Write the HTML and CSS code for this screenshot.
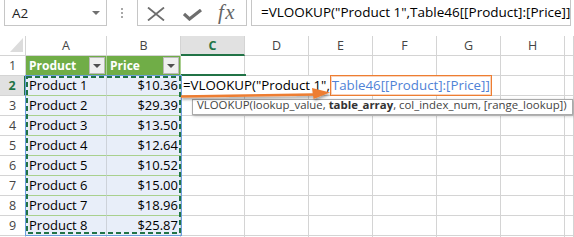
FILE: index.html
```html
<!DOCTYPE html>
<html>
<head>
<meta charset="utf-8">
<link rel="stylesheet" href="styles.css">
</head>
<body>
<div class="app">
  <div class="fbar">
    <div class="namebox"><span class="nb-text">A2</span><span class="nb-caret"></span></div>
    <div class="grip"><i></i><i></i><i></i></div>
    <div class="fbtns">
      <svg class="ic-x" width="18" height="14" viewBox="0 0 18 14"><path d="M1 0.5 L17 13.5 M17 0.5 L1 13.5" stroke="#6e6e6e" stroke-width="1.8" fill="none"/></svg>
      <svg class="ic-ok" width="19" height="12" viewBox="0 0 19 12"><path d="M1 5 L6.5 10 L18 1" stroke="#6e6e6e" stroke-width="3.2" fill="none" stroke-linejoin="miter"/></svg>
      <span class="fx">fx</span>
    </div>
    <div class="finput">=VLOOKUP("Product 1",Table46[[Product]:[Price]]</div>
  </div>

  <div class="sheet">
    <div class="cells">
      <div class="corner"><svg width="25" height="19" viewBox="0 0 25 19"><polygon points="10,16 23,16 23,2" fill="#dcdcdc"/></svg></div>
      <div class="ch">A</div><div class="ch">B</div><div class="ch on">C</div><div class="ch">D</div><div class="ch">E</div><div class="ch">F</div><div class="ch">G</div><div class="ch">H</div><div class="ch"></div>

      <div class="rh">1</div>
      <div class="th"><span>Product</span><span class="dd"></span></div>
      <div class="th"><span>Price</span><span class="dd"></span></div>
      <div class="c"></div><div class="c"></div><div class="c"></div><div class="c"></div><div class="c"></div><div class="c"></div><div class="c"></div>

      <div class="rh on">2</div>
      <div class="td">Product 1</div><div class="td num">$10.36</div>
      <div class="c"></div><div class="c"></div><div class="c"></div><div class="c"></div><div class="c"></div><div class="c"></div><div class="c"></div>

      <div class="rh">3</div>
      <div class="td">Product 2</div><div class="td num">$29.39</div>
      <div class="c"></div><div class="c"></div><div class="c"></div><div class="c"></div><div class="c"></div><div class="c"></div><div class="c"></div>

      <div class="rh">4</div>
      <div class="td">Product 3</div><div class="td num">$13.50</div>
      <div class="c"></div><div class="c"></div><div class="c"></div><div class="c"></div><div class="c"></div><div class="c"></div><div class="c"></div>

      <div class="rh">5</div>
      <div class="td">Product 4</div><div class="td num">$12.64</div>
      <div class="c"></div><div class="c"></div><div class="c"></div><div class="c"></div><div class="c"></div><div class="c"></div><div class="c"></div>

      <div class="rh">6</div>
      <div class="td">Product 5</div><div class="td num">$10.52</div>
      <div class="c"></div><div class="c"></div><div class="c"></div><div class="c"></div><div class="c"></div><div class="c"></div><div class="c"></div>

      <div class="rh">7</div>
      <div class="td">Product 6</div><div class="td num">$15.00</div>
      <div class="c"></div><div class="c"></div><div class="c"></div><div class="c"></div><div class="c"></div><div class="c"></div><div class="c"></div>

      <div class="rh">8</div>
      <div class="td">Product 7</div><div class="td num">$18.96</div>
      <div class="c"></div><div class="c"></div><div class="c"></div><div class="c"></div><div class="c"></div><div class="c"></div><div class="c"></div>

      <div class="rh">9</div>
      <div class="td">Product 8</div><div class="td num">$25.87</div>
      <div class="c"></div><div class="c"></div><div class="c"></div><div class="c"></div><div class="c"></div><div class="c"></div><div class="c"></div>

      <div class="rh"></div>
      <div class="c"></div><div class="c"></div><div class="c"></div><div class="c"></div><div class="c"></div><div class="c"></div><div class="c"></div><div class="c"></div><div class="c"></div>
    </div>

    <div class="layer">
      <div class="activeline"></div>
      <div class="editor"><span class="etext">=VLOOKUP("Product 1",</span><span class="ref">Table46[[Product]:[Price]]</span><span class="cursor"></span></div>
      <svg class="marquee" width="157" height="161" viewBox="0 0 157 161">
        <rect x="0.5" y="0.5" width="156" height="160" fill="none" stroke="#6b9fdc" stroke-width="1"/>
        <rect x="2" y="2" width="153" height="156" fill="none" stroke="#217346" stroke-width="2" stroke-dasharray="5 3"/>
      </svg>
    </div>

    <div class="tip">VLOOKUP(lookup_value, <b>table_array</b>, col_index_num, [range_lookup])</div>

    <svg class="arrow" width="160" height="22" viewBox="0 0 160 22">
      <defs>
        <filter id="sh" x="-5%" y="-50%" width="110%" height="200%">
          <feDropShadow dx="1" dy="2" stdDeviation="0.8" flood-color="#000" flood-opacity="0.35"/>
        </filter>
      </defs>
      <g filter="url(#sh)">
        <path d="M3 12.5 L136 10.5" stroke="#ed7d31" stroke-width="2.4" fill="none"/>
        <polygon points="152,8.5 134,4 135.5,15" fill="#ed7d31"/>
      </g>
    </svg>
  </div>
</div>
</body>
</html>
```

FILE: styles.css
```css
* {
  box-sizing: border-box;
  margin: 0;
  padding: 0;
}

html,
body {
  width: 574px;
  height: 237px;
  overflow: hidden;
  background: #fff;
}

body {
  font-family: "Open Sans", "DejaVu Sans", sans-serif;
  color: #000;
}

/* ---------- formula bar ---------- */
.fbar {
  height: 26px;
  display: flex;
  align-items: flex-start;
}

.namebox {
  margin: -1px 0 0 4px;
  width: 103px;
  height: 27px;
  border: 1px solid #c6c6c6;
  display: flex;
  align-items: center;
  justify-content: space-between;
  padding: 0 6px 0 7px;
  font-size: 13.5px;
  color: #222;
}

.nb-caret {
  width: 0;
  height: 0;
  border-left: 4px solid transparent;
  border-right: 4px solid transparent;
  border-top: 4px solid #707070;
  margin-top: 1px;
}

.grip {
  width: 30px;
  height: 26px;
  display: flex;
  flex-direction: column;
  align-items: center;
  justify-content: center;
  gap: 2px;
}

.grip i {
  display: block;
  width: 2px;
  height: 2px;
  background: #a8a8a8;
}

.fbtns {
  margin-top: -1px;
  width: 110px;
  height: 27px;
  border: 1px solid #c6c6c6;
  display: flex;
  align-items: center;
  padding-left: 9px;
}

.ic-x {
  display: block;
  margin-top: 2px;
}

.ic-ok {
  display: block;
  margin: 4px 0 0 18px;
}

.fx {
  margin-left: 16px;
  font-family: "Liberation Serif", "DejaVu Serif", serif;
  font-style: italic;
  font-size: 21px;
  letter-spacing: 1.5px;
  color: #666;
  line-height: 25px;
}

.finput {
  margin: -1px 0 0 4px;
  width: 320px;
  height: 27px;
  border: 1px solid #c6c6c6;
  padding-left: 9px;
  font-size: 13.5px;
  line-height: 25px;
  white-space: nowrap;
  overflow: hidden;
}

/* ---------- sheet ---------- */
.sheet {
  position: relative;
  margin-top: 10px;
  display: grid;
  font-size: 13px;
}

.cells,
.layer {
  grid-area: 1 / 1;
  display: grid;
  grid-template-columns: 26px 81px 74px repeat(6, 64px) 1fr;
  grid-template-rows: repeat(10, 20px) 1px;
}

.cells > div {
  border-right: 1px solid #d4d4d4;
  border-bottom: 1px solid #d4d4d4;
  line-height: 19px;
  white-space: nowrap;
  overflow: hidden;
}

.cells > div:nth-last-child(-n + 10) {
  border-bottom: 0;
}

.corner svg {
  display: block;
}

.ch {
  text-align: center;
  color: #444;
  font-size: 12.5px;
}

.cells > .ch.on {
  background: #e1e1e1;
  color: #217346;
  font-weight: 700;
  border-bottom: 2px solid #217346;
}

.rh {
  text-align: center;
  color: #444;
  font-size: 12.5px;
}

.cells > .rh.on {
  background: #e1e1e1;
  color: #217346;
  font-weight: 700;
  border-right: 2px solid #217346;
}

.cells > .th {
  background: #70ad47;
  color: #fff;
  font-weight: 700;
  font-size: 12px;
  display: flex;
  align-items: center;
  justify-content: space-between;
  padding-left: 3px;
  border-right-color: rgba(255, 255, 255, 0.4);
  border-bottom-color: #c5dcb6;
}

.dd {
  position: relative;
  width: 16px;
  height: 17px;
  margin-right: 1px;
  background: #efefef;
  border: 1px solid #b9b9b9;
}

.dd::after {
  content: "";
  position: absolute;
  left: 3px;
  top: 6px;
  border-left: 4px solid transparent;
  border-right: 4px solid transparent;
  border-top: 4px solid #505050;
}

.cells > .td {
  background: #e8eef9;
  border-bottom-color: #a9d08e;
  border-right-color: #cdd2da;
  padding: 0 3px;
}

.cells > .num {
  text-align: right;
  padding-right: 2px;
}

/* ---------- layer over the cells ---------- */
.layer {
  z-index: 2;
  pointer-events: none;
}

.activeline {
  grid-row: 3;
  grid-column: 4;
  align-self: start;
  margin-top: -2px;
  width: 65px;
  height: 2px;
  background: #217346;
  z-index: 3;
}

.editor {
  grid-row: 3;
  grid-column: 4 / 9;
  align-self: start;
  justify-self: start;
  width: 310px;
  height: 19px;
  background: #fff;
  display: flex;
  align-items: flex-start;
  padding-left: 2px;
  font-size: 13.3px;
  line-height: 19px;
  white-space: nowrap;
}

.ref {
  margin-top: -1px;
  height: 21px;
  line-height: 19px;
  padding: 0 1px;
  color: #4f82d6;
  border: 1px solid #ed7d31;
  box-shadow: inset 0 0 0 1px #f9d4bd;
}

.cursor {
  width: 1px;
  height: 21px;
  margin-top: -1px;
  background: #000;
}

.marquee {
  grid-row: 3 / 11;
  grid-column: 2 / 4;
  align-self: start;
  justify-self: start;
  margin: -1px 0 0 -1px;
  display: block;
  z-index: 3;
}

.tip {
  position: absolute;
  left: 192px;
  top: 63px;
  width: 381px;
  height: 16px;
  padding-left: 4px;
  background: #fff;
  border: 1px solid #aaaaaa;
  box-shadow: 1px 1px 3px rgba(0, 0, 0, 0.25);
  font-size: 11.4px;
  line-height: 10px;
  color: #444;
  white-space: nowrap;
  z-index: 4;
}

.tip b {
  color: #333;
}

.arrow {
  position: absolute;
  left: 178px;
  top: 48px;
  z-index: 5;
}
```
